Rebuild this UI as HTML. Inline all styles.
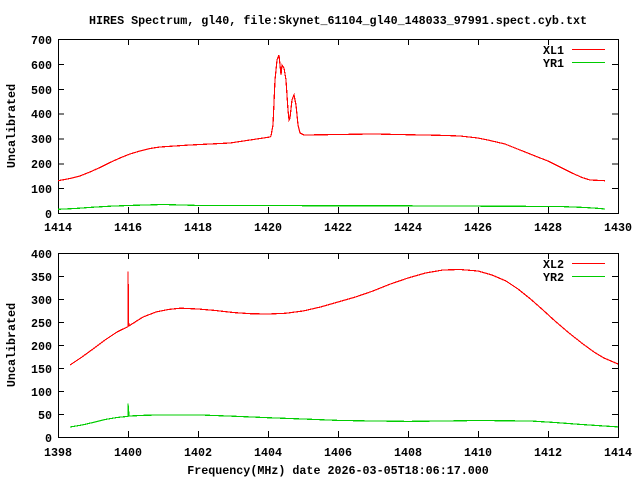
<!DOCTYPE html>
<html><head><style>
html,body{margin:0;padding:0;background:#fff;}
svg text{font-family:"Liberation Mono",monospace;font-weight:bold;font-size:11.7px;fill:#000;}
</style></head><body>
<svg width="640" height="480" xmlns="http://www.w3.org/2000/svg" shape-rendering="crispEdges">
<text x="338" y="24" text-anchor="middle">HIRES Spectrum, gl40, file:Skynet_61104_gl40_148033_97991.spect.cyb.txt</text>
<!-- plot 1 -->
<rect x="58.5" y="39.5" width="560" height="174" fill="none" stroke="#000"/>
<g stroke="#000">
<path d="M58 64.4h6M58 89.3h6M58 114.1h6M58 139h6M58 163.9h6M58 188.7h6M618 64.4h-6M618 89.3h-6M618 114.1h-6M618 139h-6M618 163.9h-6M618 188.7h-6"/>
<path d="M128.5 213v-6M198.5 213v-6M268.5 213v-6M338.5 213v-6M408.5 213v-6M478.5 213v-6M548.5 213v-6M128.5 39v6M198.5 39v6M268.5 39v6M338.5 39v6M408.5 39v6M478.5 39v6M548.5 39v6"/>
</g>
<g text-anchor="end">
<text x="52" y="44">700</text><text x="52" y="69">600</text><text x="52" y="94">500</text><text x="52" y="118">400</text><text x="52" y="143">300</text><text x="52" y="168">200</text><text x="52" y="193">100</text><text x="52" y="218">0</text>
</g>
<g text-anchor="middle">
<text x="58" y="231">1414</text><text x="128" y="231">1416</text><text x="198" y="231">1418</text><text x="268" y="231">1420</text><text x="338" y="231">1422</text><text x="408" y="231">1424</text><text x="478" y="231">1426</text><text x="548" y="231">1428</text><text x="618" y="231">1430</text>
</g>
<text transform="translate(15,126) rotate(-90)" text-anchor="middle">Uncalibrated</text>
<text x="564" y="54" text-anchor="end">XL1</text><text x="564" y="67" text-anchor="end">YR1</text>
<path d="M572 49.5h33" stroke="#f00"/><path d="M572 62.5h33" stroke="#0c0"/>
<polyline fill="none" stroke="#f00" stroke-width="1.2" points="58,180.7 70,178.5 80,176 90,172 100,167.5 110,162.5 120,158 130,154 140,151 150,148.5 160,147 175,146 190,145 210,144 230,143 250,140 260,138.5 270,137 271,136 273,125 275,80 277,60 279,55 280,65 281,75 282,65 284,68 286,80 288,110 289,120 290,118 292,100 294,95 296,105 298,125 300,133 304,135 373,134 443,135.4 460,136 478,138 490,140.5 505,144 520,150 535,156 548,161 560,167 572,173 582,177.5 590,180 605,180.7"/>
<polyline fill="none" stroke="#0c0" stroke-width="1.2" points="58,209.3 75,208.5 93,207.2 110,206.2 128,205.5 163,204.5 200,205.5 400,205.8 560,206.5 585,207.5 600,208.5 605,209"/>
<!-- plot 2 -->
<rect x="58.5" y="253.5" width="560" height="184" fill="none" stroke="#000"/>
<g stroke="#000">
<path d="M58 276.5h6M58 299.5h6M58 322.5h6M58 345.5h6M58 368.5h6M58 391.5h6M58 414.5h6M618 276.5h-6M618 299.5h-6M618 322.5h-6M618 345.5h-6M618 368.5h-6M618 391.5h-6M618 414.5h-6"/>
<path d="M128.5 437v-6M198.5 437v-6M268.5 437v-6M338.5 437v-6M408.5 437v-6M478.5 437v-6M548.5 437v-6M128.5 253v6M198.5 253v6M268.5 253v6M338.5 253v6M408.5 253v6M478.5 253v6M548.5 253v6"/>
</g>
<g text-anchor="end">
<text x="52" y="258">400</text><text x="52" y="281">350</text><text x="52" y="304">300</text><text x="52" y="327">250</text><text x="52" y="350">200</text><text x="52" y="373">150</text><text x="52" y="396">100</text><text x="52" y="419">50</text><text x="52" y="442">0</text>
</g>
<g text-anchor="middle">
<text x="58" y="456">1398</text><text x="128" y="456">1400</text><text x="198" y="456">1402</text><text x="268" y="456">1404</text><text x="338" y="456">1406</text><text x="408" y="456">1408</text><text x="478" y="456">1410</text><text x="548" y="456">1412</text><text x="618" y="456">1414</text>
</g>
<text transform="translate(15,345) rotate(-90)" text-anchor="middle">Uncalibrated</text>
<text x="338" y="474" text-anchor="middle">Frequency(MHz) date 2026-03-05T18:06:17.000</text>
<text x="564" y="268" text-anchor="end">XL2</text><text x="564" y="281" text-anchor="end">YR2</text>
<path d="M572 263.5h33" stroke="#f00"/><path d="M572 276.5h33" stroke="#0c0"/>
<polyline fill="none" stroke="#f00" stroke-width="1.2" points="70,365 82,357 93,349 105,340 117,332 128,326.6 128,271.4 128.7,326 131.5,324.3 143,317 156,312 168,309.5 180.5,308.2 198,309 215.5,310.5 233,312.5 250.5,313.7 268,314 285.5,313.3 303,311 320.5,307 338,302 355.5,297 373,291 390.5,284 408,278 425.5,273 443,270 460,269.5 478,271 492,275 506,281 518,289 530.5,299 543,310 555,321 569,333 583,344 594,352 604,358 618,364"/>
<polyline fill="none" stroke="#0c0" stroke-width="1.2" points="70,427 82,425 93,422.5 105,419.5 117,417.5 128,416.3 128,403.5 129,416 145,415.3 163,414.9 198,414.9 233,416.2 268,417.7 303,419 338,420.4 373,421 408,421.4 443,421 478,420.5 530.5,421 555,422.5 583,424.6 618,426.9"/>
</svg>
</body></html>
